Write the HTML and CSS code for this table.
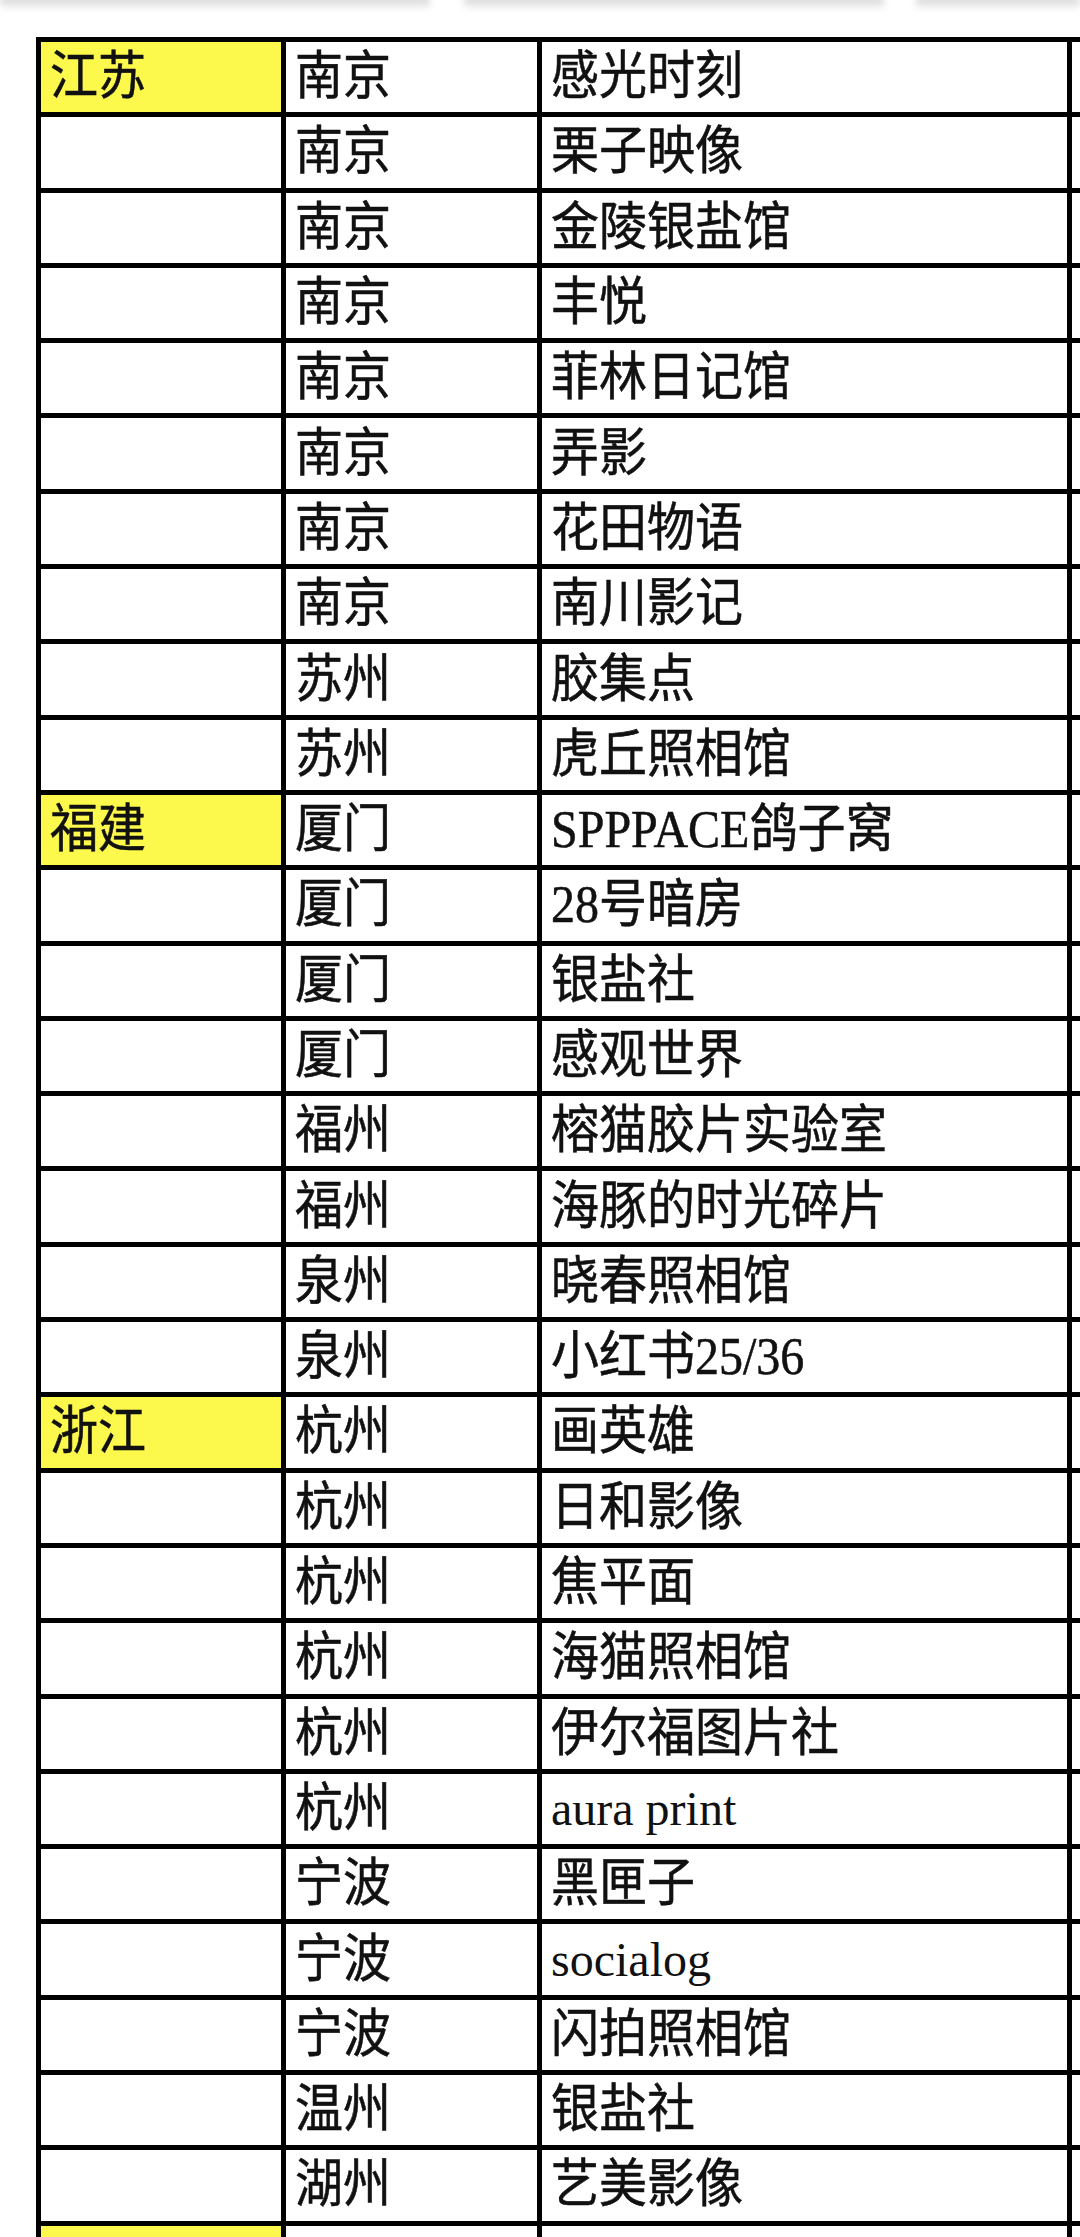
FILE: index.html
```html
<!DOCTYPE html>
<html lang="zh-CN">
<head>
<meta charset="utf-8">
<title>城市冲洗店</title>
<link rel="stylesheet" href="styles.css">
</head>
<body>
<div class="topbar">
  <div class="shade shade-a"></div>
  <div class="shade shade-b"></div>
  <div class="shade shade-c"></div>
</div>
<table class="sheet">
  <colgroup>
    <col class="c-prov"><col class="c-city"><col class="c-name"><col class="c-more">
  </colgroup>
  <tbody>
    <tr><td class="prov"><span class="t">江苏</span></td><td><span class="t">南京</span></td><td><span class="t">感光时刻</span></td><td></td></tr>
    <tr><td></td><td><span class="t">南京</span></td><td><span class="t">栗子映像</span></td><td></td></tr>
    <tr><td></td><td><span class="t">南京</span></td><td><span class="t">金陵银盐馆</span></td><td></td></tr>
    <tr><td></td><td><span class="t">南京</span></td><td><span class="t">丰悦</span></td><td></td></tr>
    <tr><td></td><td><span class="t">南京</span></td><td><span class="t">菲林日记馆</span></td><td></td></tr>
    <tr><td></td><td><span class="t">南京</span></td><td><span class="t">弄影</span></td><td></td></tr>
    <tr><td></td><td><span class="t">南京</span></td><td><span class="t">花田物语</span></td><td></td></tr>
    <tr><td></td><td><span class="t">南京</span></td><td><span class="t">南川影记</span></td><td></td></tr>
    <tr><td></td><td><span class="t">苏州</span></td><td><span class="t">胶集点</span></td><td></td></tr>
    <tr><td></td><td><span class="t">苏州</span></td><td><span class="t">虎丘照相馆</span></td><td></td></tr>
    <tr><td class="prov"><span class="t">福建</span></td><td><span class="t">厦门</span></td><td><span class="t">SPPPACE鸽子窝</span></td><td></td></tr>
    <tr><td></td><td><span class="t">厦门</span></td><td><span class="t">28号暗房</span></td><td></td></tr>
    <tr><td></td><td><span class="t">厦门</span></td><td><span class="t">银盐社</span></td><td></td></tr>
    <tr><td></td><td><span class="t">厦门</span></td><td><span class="t">感观世界</span></td><td></td></tr>
    <tr><td></td><td><span class="t">福州</span></td><td><span class="t">榕猫胶片实验室</span></td><td></td></tr>
    <tr><td></td><td><span class="t">福州</span></td><td><span class="t">海豚的时光碎片</span></td><td></td></tr>
    <tr><td></td><td><span class="t">泉州</span></td><td><span class="t">晓春照相馆</span></td><td></td></tr>
    <tr><td></td><td><span class="t">泉州</span></td><td><span class="t">小红书25/36</span></td><td></td></tr>
    <tr><td class="prov"><span class="t">浙江</span></td><td><span class="t">杭州</span></td><td><span class="t">画英雄</span></td><td></td></tr>
    <tr><td></td><td><span class="t">杭州</span></td><td><span class="t">日和影像</span></td><td></td></tr>
    <tr><td></td><td><span class="t">杭州</span></td><td><span class="t">焦平面</span></td><td></td></tr>
    <tr><td></td><td><span class="t">杭州</span></td><td><span class="t">海猫照相馆</span></td><td></td></tr>
    <tr><td></td><td><span class="t">杭州</span></td><td><span class="t">伊尔福图片社</span></td><td></td></tr>
    <tr><td></td><td><span class="t">杭州</span></td><td><span class="t latin">aura print</span></td><td></td></tr>
    <tr><td></td><td><span class="t">宁波</span></td><td><span class="t">黑匣子</span></td><td></td></tr>
    <tr><td></td><td><span class="t">宁波</span></td><td><span class="t latin">socialog</span></td><td></td></tr>
    <tr><td></td><td><span class="t">宁波</span></td><td><span class="t">闪拍照相馆</span></td><td></td></tr>
    <tr><td></td><td><span class="t">温州</span></td><td><span class="t">银盐社</span></td><td></td></tr>
    <tr><td></td><td><span class="t">湖州</span></td><td><span class="t">艺美影像</span></td><td></td></tr>
    <tr><td class="prov"></td><td></td><td></td><td></td></tr>
  </tbody>
</table>
</body>
</html>
```
FILE: styles.css
```css
html, body {
  margin: 0;
  padding: 0;
  background: #ffffff;
}
body {
  width: 1080px;
  height: 2237px;
  overflow: hidden;
  font-family: "Liberation Serif", "Noto Sans CJK SC", serif;
  color: #111;
}
.topbar {
  height: 37px;
  display: flex;
  align-items: flex-start;
  overflow: hidden;
}
.shade {
  height: 13px;
  background: linear-gradient(#cfcfcf, #efefef 70%, #ffffff);
  filter: blur(3px);
  margin-top: -3px;
}
.shade-a { width: 430px; }
.shade-b { width: 420px; margin-left: 34px; }
.shade-c { flex: 1; margin-left: 32px; }

.sheet {
  margin-left: 36px;
  border-collapse: separate;
  border-spacing: 5px;
  background: #000;
  table-layout: fixed;
  width: 1241px;
}
.c-prov { width: 240px; }
.c-city { width: 251px; }
.c-name { width: 525px; }
.c-more { width: 200px; }
.sheet td {
  background: #fff;
  height: 70.3px;
  padding: 0 0 0 9px;
  box-sizing: border-box;
  font-size: 48px;
  line-height: 1;
  white-space: nowrap;
  overflow: hidden;
  vertical-align: middle;
}
.sheet td.prov {
  background: #fcf84c;
}
.t {
  display: inline-block;
  transform: scaleY(1.1);
  transform-origin: 50% 55%;
  -webkit-text-stroke: 0.5px #111;
}
.t.latin {
  transform: none;
  -webkit-text-stroke: 0;
}
```
